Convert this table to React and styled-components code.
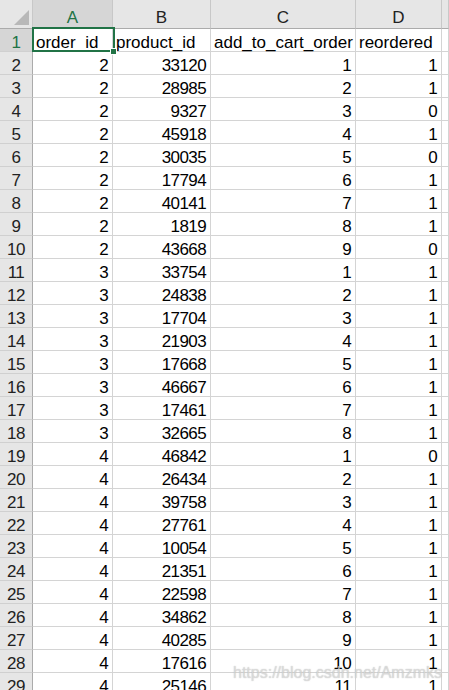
import React from 'react';
import styled, { createGlobalStyle } from 'styled-components';

const GlobalStyle = createGlobalStyle`
  html, body {
    margin: 0;
    padding: 0;
    background: #ffffff;
    overflow: hidden;
  }
  body {
    font-family: "Liberation Sans", Arial, sans-serif;
  }
`;

const Page = styled.div`
  position: relative;
  width: 449px;
  height: 690px;
  overflow: hidden;
`;

const Sheet = styled.div`
  display: grid;
  grid-template-columns: 33px 80px 98px 145px 86px 1fr;
  grid-template-rows: 29px;
  grid-auto-rows: 23px;
`;

const Corner = styled.div`
  position: relative;
  background: #e6e6e6;
  border-right: 1px solid #c8c8c8;
  border-bottom: 1px solid #ababab;
  box-sizing: border-box;

  &::after {
    content: '';
    position: absolute;
    right: 3px;
    bottom: 3px;
    width: 0;
    height: 0;
    border-left: 15px solid transparent;
    border-bottom: 15px solid #b8b8b8;
  }
`;

const ColHead = styled.div`
  display: flex;
  align-items: flex-end;
  justify-content: center;
  box-sizing: border-box;
  padding-bottom: 2px;
  background: ${(p) => (p.$active ? '#d6d6d6' : '#e6e6e6')};
  color: ${(p) => (p.$active ? '#217346' : '#222222')};
  border-right: 1px solid #c8c8c8;
  border-bottom: 1px solid #ababab;
  font-size: 17px;
  line-height: 17px;
`;

const RowHead = styled.div`
  display: flex;
  align-items: flex-end;
  justify-content: center;
  box-sizing: border-box;
  background: ${(p) => (p.$active ? '#d6d6d6' : '#e6e6e6')};
  color: ${(p) => (p.$active ? '#217346' : '#222222')};
  border-right: 1px solid #ababab;
  border-bottom: 1px solid #d0d0d0;
  font-size: 17px;
  line-height: 17px;
  letter-spacing: -0.5px;
`;

const Cell = styled.div`
  display: flex;
  align-items: flex-end;
  justify-content: ${(p) => (p.$num ? 'flex-end' : 'flex-start')};
  box-sizing: border-box;
  padding: 0 ${(p) => (p.$num ? '4px' : '0')} 0 ${(p) => (p.$num ? '0' : '3px')};
  border-right: 1px solid #d4d4d4;
  border-bottom: 1px solid #d4d4d4;
  color: #000000;
  font-size: 17px;
  line-height: 17px;
  letter-spacing: ${(p) => (p.$num ? '-0.6px' : '0')};
  white-space: nowrap;
  overflow: visible;
`;

const Selection = styled.div`
  position: absolute;
  left: 32px;
  top: 27px;
  width: 83px;
  height: 25px;
  box-sizing: border-box;
  border: 2px solid #217346;
  pointer-events: none;
`;

const Handle = styled.div`
  position: absolute;
  left: 110px;
  top: 48px;
  width: 7px;
  height: 7px;
  box-sizing: border-box;
  background: #217346;
  border: 1px solid #ffffff;
`;

const Watermark = styled.div`
  position: absolute;
  right: 7px;
  top: 665px;
  font-family: "Liberation Sans", Arial, sans-serif;
  font-size: 16px;
  line-height: 16px;
  color: rgba(235, 235, 235, 0.6);
  text-shadow: 0 0 1px rgba(150, 150, 150, 0.7);
  pointer-events: none;
`;

const headers = ['order_id', 'product_id', 'add_to_cart_order', 'reordered'];

const rows = [
  [2, 33120, 1, 1],
  [2, 28985, 2, 1],
  [2, 9327, 3, 0],
  [2, 45918, 4, 1],
  [2, 30035, 5, 0],
  [2, 17794, 6, 1],
  [2, 40141, 7, 1],
  [2, 1819, 8, 1],
  [2, 43668, 9, 0],
  [3, 33754, 1, 1],
  [3, 24838, 2, 1],
  [3, 17704, 3, 1],
  [3, 21903, 4, 1],
  [3, 17668, 5, 1],
  [3, 46667, 6, 1],
  [3, 17461, 7, 1],
  [3, 32665, 8, 1],
  [4, 46842, 1, 0],
  [4, 26434, 2, 1],
  [4, 39758, 3, 1],
  [4, 27761, 4, 1],
  [4, 10054, 5, 1],
  [4, 21351, 6, 1],
  [4, 22598, 7, 1],
  [4, 34862, 8, 1],
  [4, 40285, 9, 1],
  [4, 17616, 10, 1],
  [4, 25146, 11, 1],
];

const App = () => {
  return (
    <Page>
      <GlobalStyle />
      <Sheet>
        <Corner />
        {['A', 'B', 'C', 'D', ''].map((l, i) => (
          <ColHead key={i} $active={l === 'A'}>{l}</ColHead>
        ))}

        <RowHead $active>1</RowHead>
        {headers.map((h) => (
          <Cell key={h}>{h}</Cell>
        ))}
        <Cell />

        {rows.map((r, i) => (
          <React.Fragment key={i}>
            <RowHead>{i + 2}</RowHead>
            {r.map((v, j) => (
              <Cell key={j} $num>{v}</Cell>
            ))}
            <Cell />
          </React.Fragment>
        ))}
      </Sheet>
      <Selection />
      <Handle />
      <Watermark>https://blog.csdn.net/Amzmks</Watermark>
    </Page>
  );
};

export default App;
